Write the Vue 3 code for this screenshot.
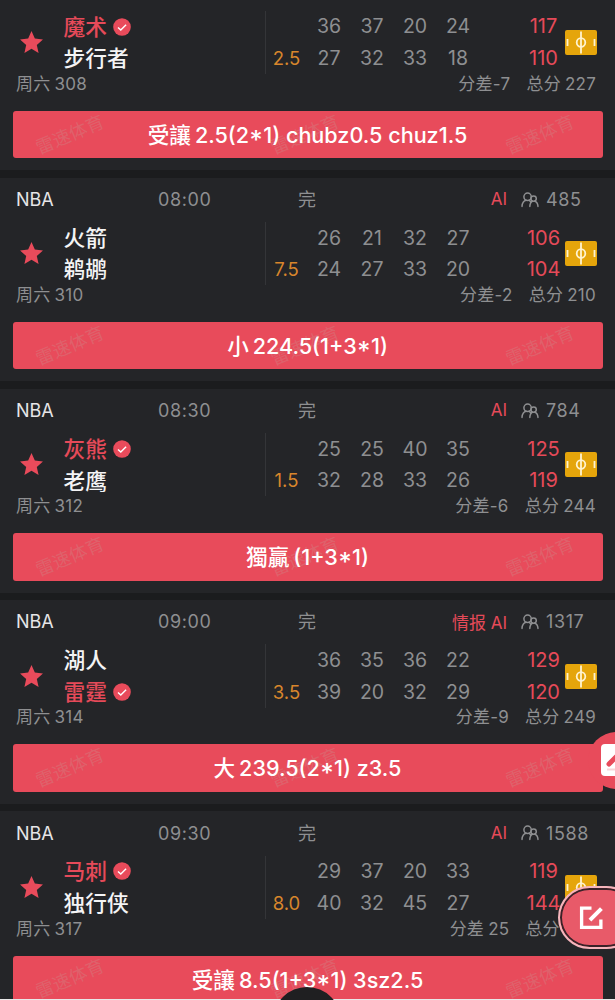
<template>
  <div class="page">
    <div class="match-list">
      <div
        class="match-card"
        :class="{ 'match-card--cut': !match.time }"
        v-for="match in matches"
        :key="match.code"
      >
        <div class="match-card__header" v-if="match.time">
          <span class="match-card__league">NBA</span>
          <span class="match-card__time">{{ match.time }}</span>
          <span class="match-card__status">完</span>
          <span class="match-card__tags">{{ match.tags }}</span>
          <svg class="match-card__people" viewBox="0 0 18 16">
            <circle cx="6.6" cy="4.8" r="3.7" />
            <path d="M1 14.4c.2-3.400 2-5.800 4.200-6.200M8.200 8.200l1.600 1.800" />
            <circle cx="12.600" cy="6.600" r="2.700" />
            <path d="M8.800 14.400c.2-2.600 1.200-4.600 2.600-5.200M13.800 9.200c2 .6 3 2.400 3.200 5.200" />
          </svg>
          <span class="match-card__count">{{ match.count }}</span>
        </div>

        <div class="match-card__body">
          <svg class="match-card__star" viewBox="0 0 24 24">
            <path
              d="M12 1l3.200 7.200 7.800.8-5.900 5.300 1.700 7.700-6.800-4-6.800 4 1.700-7.700L1 9l7.800-.8z"
            />
          </svg>

          <div class="match-card__teams">
            <div
              class="match-card__team"
              :class="{ 'match-card__team--picked': match.picked === i }"
              v-for="(team, i) in match.teams"
              :key="team"
            >
              <span>{{ team }}</span>
              <svg class="match-card__check" v-if="match.picked === i" viewBox="0 0 18 18">
                <circle cx="9" cy="9" r="8.800" />
                <path d="M5 9.400l2.800 2.700 5.300-5.400" />
              </svg>
            </div>
          </div>

          <div class="match-card__odds">{{ match.odds }}</div>

          <div class="match-card__scores">
            <div class="match-card__quarters" v-for="(row, i) in match.scores" :key="i">
              <span v-for="(score, q) in row" :key="q">{{ score }}</span>
            </div>
          </div>

          <div class="match-card__totals">
            <span v-for="(total, i) in match.totals" :key="i">{{ total }}</span>
          </div>

          <svg class="match-card__court" viewBox="0 0 32 25">
            <rect width="32" height="25" rx="2" />
            <path d="M16 1.500v22M2.500 9v7M29.500 9v7" />
            <circle cx="16" cy="12.500" r="4.300" />
          </svg>
        </div>

        <div class="match-card__meta">
          <span class="match-card__code">周六<i></i>{{ match.code }}</span>
          <span class="match-card__diff">分差<i v-if="match.diff > 0"></i>{{ match.diff }}</span>
          <span class="match-card__sum">总分<i></i>{{ match.sum }}</span>
        </div>

        <div class="match-card__tip">
          <div class="match-card__marks">
            <span v-for="n in 3" :key="n">雷速体育</span>
          </div>
          <div class="match-card__pick">
            {{ match.pick }}<i></i>{{ match.line }}
          </div>
        </div>
      </div>
    </div>

    <div class="note-button">
      <svg viewBox="0 0 32 32">
        <rect width="32" height="32" rx="4" />
        <path class="note-button__pen" d="M8 20L22 6" />
        <path class="note-button__line" d="M6 25.500h26" />
      </svg>
    </div>

    <div class="edit-button">
      <svg viewBox="0 0 24 24">
        <path d="M12 3h-9.500v18.500h18.500v-7.500" />
        <path class="edit-button__pen" d="M10.500 14.500L21.500 3.500" />
      </svg>
    </div>

    <div class="tab-bar"></div>
    <div class="tab-bar__knob"></div>
  </div>
</template>

<script setup>
const matches = [
  {
    code: "308",
    teams: ["魔术", "步行者"],
    picked: 0,
    odds: "2.5",
    scores: [
      [36, 37, 20, 24],
      [27, 32, 33, 18],
    ],
    totals: [117, 110],
    diff: -7,
    sum: 227,
    pick: "受讓",
    line: "2.5(2*1) chubz0.5 chuz1.5",
  },
  {
    code: "310",
    time: "08:00",
    tags: "AI",
    count: 485,
    teams: ["火箭", "鹈鹕"],
    odds: "7.5",
    scores: [
      [26, 21, 32, 27],
      [24, 27, 33, 20],
    ],
    totals: [106, 104],
    diff: -2,
    sum: 210,
    pick: "小",
    line: "224.5(1+3*1)",
  },
  {
    code: "312",
    time: "08:30",
    tags: "AI",
    count: 784,
    teams: ["灰熊", "老鹰"],
    picked: 0,
    odds: "1.5",
    scores: [
      [25, 25, 40, 35],
      [32, 28, 33, 26],
    ],
    totals: [125, 119],
    diff: -6,
    sum: 244,
    pick: "獨贏",
    line: "(1+3*1)",
  },
  {
    code: "314",
    time: "09:00",
    tags: "情报 AI",
    count: 1317,
    teams: ["湖人", "雷霆"],
    picked: 1,
    odds: "3.5",
    scores: [
      [36, 35, 36, 22],
      [39, 20, 32, 29],
    ],
    totals: [129, 120],
    diff: -9,
    sum: 249,
    pick: "大",
    line: "239.5(2*1) z3.5",
  },
  {
    code: "317",
    time: "09:30",
    tags: "AI",
    count: 1588,
    teams: ["马刺", "独行侠"],
    picked: 0,
    odds: "8.0",
    scores: [
      [29, 37, 20, 33],
      [40, 32, 45, 27],
    ],
    totals: [119, 144],
    diff: 25,
    sum: 263,
    pick: "受讓",
    line: "8.5(1+3*1) 3sz2.5",
  },
];
</script>

<style>
body {
  background: #1b1c1e;
}
</style>

<style scoped>
.page {
  position: relative;
  width: 615px;
  height: 1000px;
  overflow: hidden;
  background: #1b1c1e;
  color: #8e8f91;
  font-family: Inter, "Noto Sans CJK SC", sans-serif;
  white-space: nowrap;
}

.match-list {
  display: flex;
  flex-direction: column;
  gap: 7.3px;
}

.match-card {
  height: 203.9px;
  flex-shrink: 0;
  box-sizing: border-box;
  background: #242528;
}

.match-card--cut {
  height: 170.3px;
  padding-top: 10.4px;
}

.match-card__header {
  display: grid;
  grid-template-columns: 142px 140px 100px 109px 14px 25px 69px;
  align-items: center;
  height: 44px;
  padding-left: 16px;
  font-size: 18px;
}

.match-card__league {
  color: #e6e6e7;
}

.match-card__time {
  letter-spacing: 0.6px;
}

.match-card__status {
  padding-bottom: 3px;
}

.match-card__tags {
  color: #e64a59;
  font-size: 17px;
  text-align: right;
  padding-bottom: 1px;
}

.match-card__people {
  grid-column: 6;
  width: 18px;
  height: 16px;
  fill: none;
  stroke: #8e8f91;
  stroke-width: 1.5;
  stroke-linecap: round;
}

.match-card__count {
  letter-spacing: 0.6px;
}

.match-card__body {
  display: grid;
  grid-template-columns: 44.5px 201px 43px 172px 85px 32px;
  align-items: center;
  height: 63.2px;
  padding-left: 19px;
}

.match-card__star {
  width: 25px;
  height: 25px;
  fill: #e94b5b;
}

.match-card__team {
  display: flex;
  align-items: center;
  gap: 6px;
  height: 31.6px;
  color: #f4f4f5;
  font-size: 21.7px;
  font-weight: 500;
}

.match-card__team span {
  padding-bottom: 3px;
}

.match-card__team--picked {
  color: #e64a59;
}

.match-card__check {
  width: 18px;
  height: 18px;
  fill: #e94b5b;
}

.match-card__check path {
  fill: none;
  stroke: #fff;
  stroke-width: 1.4;
}

.match-card__odds {
  display: flex;
  align-items: flex-end;
  justify-content: center;
  height: 63.2px;
  box-sizing: border-box;
  border-left: 1.5px solid #343538;
  color: #d8862c;
  font-size: 18.5px;
  line-height: 31px;
}

.match-card__scores,
.match-card__totals {
  padding-top: 1px;
}

.match-card__quarters {
  display: grid;
  grid-template-columns: repeat(4, 43px);
  font-size: 19.5px;
  line-height: 31.6px;
  text-align: center;
}

.match-card__totals {
  display: flex;
  flex-direction: column;
  align-items: center;
  padding-left: 43px;
  color: #e64a59;
  font-size: 20px;
  line-height: 31.6px;
}

.match-card__court {
  width: 32px;
  height: 25px;
  fill: #e5a50b;
}

.match-card__court path,
.match-card__court circle {
  fill: none;
  stroke: #fff3cf;
  stroke-width: 1.8;
}

.match-card__meta {
  display: flex;
  align-items: center;
  height: 20.4px;
  box-sizing: border-box;
  padding: 0 19px 3px 16px;
  font-size: 17px;
  letter-spacing: 0.25px;
}

.match-card__meta i,
.match-card__pick i {
  display: inline-block;
  width: 4px;
}

.match-card__code {
  flex: 1;
}

.match-card__sum {
  margin-left: 16px;
}

.match-card__tip {
  position: relative;
  height: 47.5px;
  margin: 16.8px 12.5px 0;
  border-radius: 3px;
  background: #e84b5b;
}

.match-card__pick {
  position: relative;
  padding-top: 1px;
  color: #fff;
  font-size: 21.6px;
  font-weight: 500;
  line-height: 47px;
  text-align: center;
}

.match-card__marks {
  position: absolute;
  inset: 0;
  display: flex;
  align-items: center;
  gap: 163px;
  padding-left: 21px;
}

.match-card__marks span {
  width: 72px;
  flex-shrink: 0;
  color: rgba(205, 140, 140, 0.36);
  font-size: 18px;
  line-height: 18px;
  transform: rotate(-23deg);
}

.note-button {
  position: absolute;
  top: 732px;
  left: 588px;
  width: 57px;
  height: 57px;
  border-radius: 50%;
  background: #e84b5b;
}

.note-button svg {
  width: 32px;
  height: 32px;
  margin: 12px 0 0 13px;
  fill: #fff;
}

.note-button__pen {
  stroke: #e84b5b;
  stroke-width: 5;
  stroke-linecap: round;
}

.note-button__line {
  stroke: #f8d5d9;
  stroke-width: 2;
}

.edit-button {
  position: absolute;
  top: 886px;
  left: 558px;
  display: flex;
  align-items: center;
  width: 80px;
  height: 63px;
  padding-left: 19px;
  box-sizing: border-box;
  border: 2px solid #f5b5bc;
  border-radius: 32px;
  background: #e85a69;
  box-shadow: inset 0 0 0 2px #3a2228;
}

.edit-button svg {
  width: 25px;
  height: 25px;
  fill: none;
  stroke: #fff;
  stroke-width: 3.2;
}

.edit-button__pen {
  stroke-width: 3.8;
}

.tab-bar {
  position: absolute;
  top: 998.5px;
  left: 0;
  width: 100%;
  height: 2px;
  background: #e8e8e8;
}

.tab-bar__knob {
  position: absolute;
  top: 987px;
  left: 273px;
  width: 68px;
  height: 68px;
  border-radius: 50%;
  background: #1f1f21;
}
</style>
